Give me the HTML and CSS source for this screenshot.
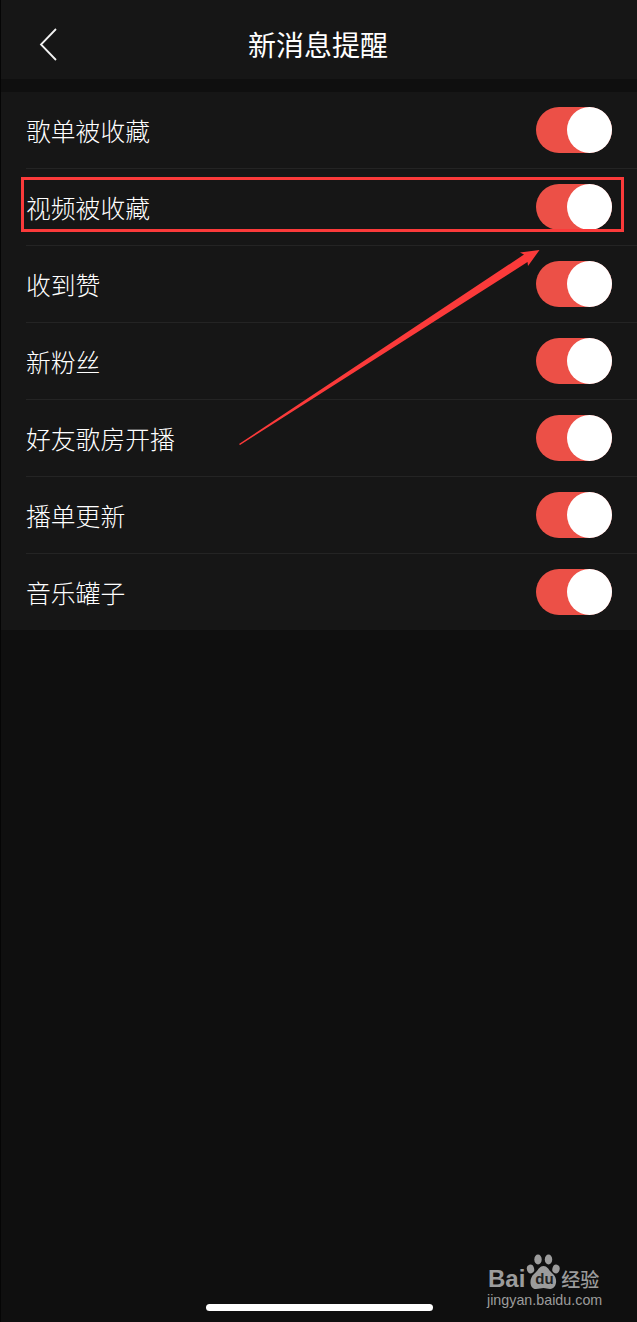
FILE: index.html
```html
<!DOCTYPE html>
<html lang="zh-CN">
<head>
    <meta charset="UTF-8">
    <meta name="viewport" content="width=device-width, initial-scale=1.0">
    <title>新消息提醒</title>
    <link rel="stylesheet" href="styles.css">
</head>
<body>
    <div class="page">
        <header class="header">
            <svg class="back-icon" width="20" height="36" viewBox="0 0 20 36">
                <path d="M18 2 L3 17.5 L18 33" fill="none" stroke="#f2f2f2" stroke-width="1.8"/>
            </svg>
            <h1>新消息提醒</h1>
        </header>

        <div class="settings-list">
            <div class="setting-row"><span>歌单被收藏</span><div class="toggle"></div></div>
            <div class="setting-row"><span>视频被收藏</span><div class="toggle"></div></div>
            <div class="setting-row"><span>收到赞</span><div class="toggle"></div></div>
            <div class="setting-row"><span>新粉丝</span><div class="toggle"></div></div>
            <div class="setting-row"><span>好友歌房开播</span><div class="toggle"></div></div>
            <div class="setting-row"><span>播单更新</span><div class="toggle"></div></div>
            <div class="setting-row"><span>音乐罐子</span><div class="toggle"></div></div>
        </div>

        <!-- annotation drawn over the screenshot -->
        <div class="highlight-box"></div>
        <svg class="arrow" width="637" height="1322" viewBox="0 0 637 1322">
            <polygon points="239,444 524,254.5 520,252.5 539.5,250 528,266 527.5,262 240,445" fill="#fb3a3a"/>
        </svg>

        <div class="watermark">
            <div class="watermark-logo">
                <span class="wm-bai">Bai</span>
                <span class="wm-paw">
                    <svg width="35" height="37" viewBox="0 0 35 37" fill="#9c9c9c">
                        <ellipse cx="4.5" cy="15" rx="3.6" ry="4.4" transform="rotate(-15 4.5 15)"/>
                        <ellipse cx="12" cy="5.5" rx="3.7" ry="5"/>
                        <ellipse cx="22.5" cy="5.5" rx="3.7" ry="5"/>
                        <ellipse cx="30" cy="15" rx="3.6" ry="4.4" transform="rotate(15 30 15)"/>
                        <path d="M17.5 12 C22 12 23 17 27 20 C32 24 31 35 24 35 C21 35 20 34 17.5 34 C15 34 13 35 10 35 C3 35 3 24 8 20 C12 17 13 12 17.5 12 Z"/>
                    </svg>
                    <span class="wm-du">du</span>
                </span>
                <span class="wm-cn">经验</span>
            </div>
            <div class="watermark-url">jingyan.baidu.com</div>
        </div>

        <div class="home-indicator"></div>
    </div>
</body>
</html>
```

FILE: styles.css
```css
* {
    margin: 0;
    padding: 0;
    box-sizing: border-box;
}
body {
    background-color: #0f0f0f;
    color: #fff;
    font-family: "Noto Sans CJK SC", "Noto Sans", sans-serif;
}
.page {
    position: relative;
    width: 637px;
    height: 1322px;
    overflow: hidden;
    border-left: 1px solid #050505;
}
.header {
    position: relative;
    display: flex;
    align-items: center;
    justify-content: center;
    height: 79px;
    padding-top: 9px;
    background-color: #161616;
}
.header h1 {
    font-size: 28px;
    font-weight: 400;
    line-height: 40px;
    margin-left: -2px;
}
.back-icon {
    position: absolute;
    left: 37px;
    top: 27px;
}
.settings-list {
    margin-top: 13px;
    background-color: #161616;
}
.setting-row {
    display: flex;
    align-items: center;
    justify-content: space-between;
    height: 77px;
    margin-left: 25px;
    padding-right: 25px;
    border-bottom: 1px solid #242424;
    font-size: 24.8px;
    font-weight: 300;
}
.setting-row:last-child {
    height: 76px;
    border-bottom: none;
}
.toggle {
    display: flex;
    justify-content: flex-end;
    width: 76px;
    height: 46px;
    border-radius: 23px;
    background-color: #ec5047;
}
.toggle::after {
    content: "";
    width: 45px;
    height: 46px;
    border-radius: 50%;
    background-color: #fff;
}
.highlight-box {
    position: absolute;
    left: 20px;
    top: 177px;
    width: 603px;
    height: 55px;
    border: 3px solid #fb3a3a;
}
.arrow {
    position: absolute;
    left: -1px;
    top: 0;
}
.watermark {
    position: absolute;
    left: 486px;
    top: 1254px;
    width: 118px;
    color: #9c9c9c;
}
.watermark-logo {
    display: flex;
    align-items: flex-end;
    height: 37px;
    font-family: "Liberation Sans", sans-serif;
}
.wm-bai {
    font-size: 24px;
    font-weight: 700;
    line-height: 24px;
    margin-left: 1px;
    margin-right: 1px;
}
.wm-paw {
    position: relative;
    display: block;
    width: 35px;
    height: 37px;
}
.wm-du {
    position: absolute;
    left: 9px;
    top: 17px;
    font-size: 15px;
    font-weight: 700;
    line-height: 16px;
    color: #222;
}
.wm-cn {
    font-family: "Noto Sans CJK SC", sans-serif;
    font-size: 19px;
    font-weight: 500;
    line-height: 24px;
}
.watermark-url {
    margin-top: 1px;
    font-family: "Liberation Sans", sans-serif;
    font-size: 14.3px;
    line-height: 17px;
    white-space: nowrap;
}
.home-indicator {
    position: absolute;
    left: 205px;
    top: 1304px;
    width: 227px;
    height: 7px;
    border-radius: 4px;
    background-color: #fff;
}
```
